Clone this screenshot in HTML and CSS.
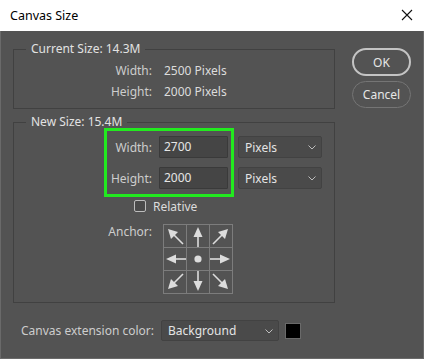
FILE: index.html
```html
<!DOCTYPE html>
<html>
<head>
<meta charset="utf-8">
<title>Canvas Size</title>
<link rel="stylesheet" href="styles.css">
</head>
<body>
<div class="window">
  <div class="titlebar">
    <span class="title">Canvas Size</span>
    <svg class="close" width="12" height="12" viewBox="0 0 12 12"><path d="M1 1 L11 11 M11 1 L1 11" stroke="#111" stroke-width="1.1" fill="none"/></svg>
  </div>
  <div class="content">
    <div class="main">
      <fieldset class="group group-current">
        <legend>Current Size: 14.3M</legend>
        <div class="info-grid">
          <span class="lbl">Width:</span><span class="val">2500 Pixels</span>
          <span class="lbl">Height:</span><span class="val">2000 Pixels</span>
        </div>
      </fieldset>
      <fieldset class="group group-new">
        <legend>New Size: 15.4M</legend>
        <div class="size-grid">
          <span class="lbl">Width:</span>
          <div class="input">2700</div>
          <div class="select select-unit"><span>Pixels</span><svg class="chev" width="8" height="5" viewBox="0 0 8 5"><path d="M0.5 0.5 L4 4 L7.5 0.5" stroke="#bdbdbd" stroke-width="1" fill="none"/></svg></div>
          <span class="lbl">Height:</span>
          <div class="input">2000</div>
          <div class="select select-unit"><span>Pixels</span><svg class="chev" width="8" height="5" viewBox="0 0 8 5"><path d="M0.5 0.5 L4 4 L7.5 0.5" stroke="#bdbdbd" stroke-width="1" fill="none"/></svg></div>
        </div>
        <div class="highlight"></div>
        <label class="check-row"><span class="checkbox"></span><span>Relative</span></label>
        <div class="anchor-row">
          <span class="lbl">Anchor:</span>
          <svg class="anchor" width="70" height="70" viewBox="0 0 70 70">
            <g stroke="#7c7c7c" stroke-width="1" fill="none">
              <rect x="0.5" y="0.5" width="69" height="69"/>
              <path d="M23.5 0 V70 M46.5 0 V70 M0 23.5 H70 M0 46.5 H70"/>
            </g>
            <g stroke="#dcdcdc" stroke-width="1.6" fill="none">
              <path d="M35 12 V23"/>
              <path d="M35 47 V58"/>
              <path d="M12 35 H23"/>
              <path d="M47 35 H58"/>
              <path d="M11 11 L20 20"/>
              <path d="M59 11 L50 20"/>
              <path d="M11 59 L20 50"/>
              <path d="M59 59 L50 50"/>
            </g>
            <g fill="#dcdcdc">
              <polygon points="35,3 30.5,13 39.5,13"/>
              <polygon points="35,67 30.5,57 39.5,57"/>
              <polygon points="3,35 13,30.5 13,39.5"/>
              <polygon points="67,35 57,30.5 57,39.5"/>
              <polygon points="5,5 8,15 15,8"/>
              <polygon points="65,5 62,15 55,8"/>
              <polygon points="5,65 8,55 15,62"/>
              <polygon points="65,65 62,55 55,62"/>
              <circle cx="35" cy="35" r="3.6"/>
            </g>
          </svg>
        </div>
      </fieldset>
      <div class="ext-row">
        <span class="lbl">Canvas extension color:</span>
        <div class="select select-ext"><span>Background</span><svg class="chev" width="8" height="5" viewBox="0 0 8 5"><path d="M0.5 0.5 L4 4 L7.5 0.5" stroke="#bdbdbd" stroke-width="1" fill="none"/></svg></div>
        <span class="swatch"></span>
      </div>
    </div>
    <div class="buttons">
      <button class="btn btn-ok">OK</button>
      <button class="btn btn-cancel">Cancel</button>
    </div>
  </div>
</div>
</body>
</html>
```
FILE: styles.css
```css
* { box-sizing: border-box; }
html, body { margin: 0; padding: 0; }
body {
  width: 424px;
  height: 359px;
  overflow: hidden;
  font-family: "Noto Sans", "Open Sans", sans-serif;
  font-size: 12px;
  background: #535353;
}
.window {
  width: 424px;
  height: 359px;
  display: flex;
  flex-direction: column;
}
.titlebar {
  height: 31px;
  background: #ffffff;
  display: flex;
  align-items: center;
  justify-content: space-between;
  padding: 0 11px 0 10px;
  flex: none;
}
.title {
  color: #000;
  font-size: 12.5px;
  margin-top: -1px;
}
.close { margin-top: -2px; }
.content {
  flex: 1;
  background: #535353;
  border-left: 1px solid #6a6a6a;
  border-right: 1px solid #6a6a6a;
  border-bottom: 1px solid #6a6a6a;
  display: flex;
  padding: 10px 0 0 12px;
  gap: 17px;
}
.main {
  width: 322px;
  display: flex;
  flex-direction: column;
}
.group {
  margin: 0;
  padding: 0;
  border: 1px solid #414141;
  min-inline-size: 0;
  position: relative;
}
.group legend {
  margin-left: 12px;
  padding: 0 5px;
  color: #e2e2e2;
  line-height: 16px;
}
.lbl {
  color: #cdcdcd;
  text-align: right;
}
.info-grid {
  display: grid;
  grid-template-columns: 138px auto;
  column-gap: 12px;
  grid-auto-rows: 21px;
  align-items: center;
  padding: 3px 0 6px;
}
.val { color: #dcdcdc; }
.group-new { margin-top: 5px; padding-bottom: 8px; }
.size-grid {
  display: grid;
  grid-template-columns: 138px 69px 87px;
  column-gap: 7px;
  row-gap: 9px;
  align-items: center;
  padding-top: 6px;
}
.size-grid .select { margin-left: 3px; }
.input {
  height: 22px;
  background: #454545;
  border: 1px solid #3a3a3a;
  color: #e6e6e6;
  padding-left: 4px;
  line-height: 20px;
  border-radius: 1px;
}
.select {
  height: 22px;
  background: #4a4a4a;
  border: 1px solid #424242;
  border-radius: 2px;
  color: #e4e4e4;
  display: flex;
  align-items: center;
  justify-content: space-between;
  padding: 0 5px 0 6px;
}
.chev { margin-top: 1px; }
.highlight {
  position: absolute;
  left: 90px;
  top: -2px;
  width: 130px;
  height: 69px;
  border: 3px solid #22ea1f;
  pointer-events: none;
}
.check-row {
  display: flex;
  align-items: center;
  gap: 7px;
  margin: 10px 0 0 120px;
  color: #dcdcdc;
  height: 14px;
}
.checkbox {
  width: 12px;
  height: 12px;
  border: 1px solid #bdbdbd;
  border-radius: 2px;
  background: #4a4a4a;
}
.anchor-row {
  display: flex;
  align-items: flex-start;
  gap: 11px;
  margin-top: 11px;
}
.anchor-row .lbl {
  width: 138px;
  line-height: 16px;
}
.anchor { display: block; }
.ext-row {
  display: flex;
  align-items: center;
  margin-top: 17px;
  padding-left: 8px;
}
.ext-row .lbl { margin-right: 7px; }
.select-ext {
  width: 118px;
  height: 21px;
}
.swatch {
  width: 16px;
  height: 16px;
  background: #000;
  border: 1px solid #6a6a6a;
  margin-left: 6px;
}
.buttons {
  display: flex;
  flex-direction: column;
  gap: 5px;
  padding-top: 7px;
}
.btn {
  width: 59px;
  height: 28px;
  border-radius: 14px;
  background: #535353;
  color: #e6e6e6;
  font-family: inherit;
  font-size: 12px;
  padding: 0;
}
.btn-ok { border: 2px solid #c4c4c4; }
.btn-cancel { border: 1px solid #757575; height: 27px; }
```
